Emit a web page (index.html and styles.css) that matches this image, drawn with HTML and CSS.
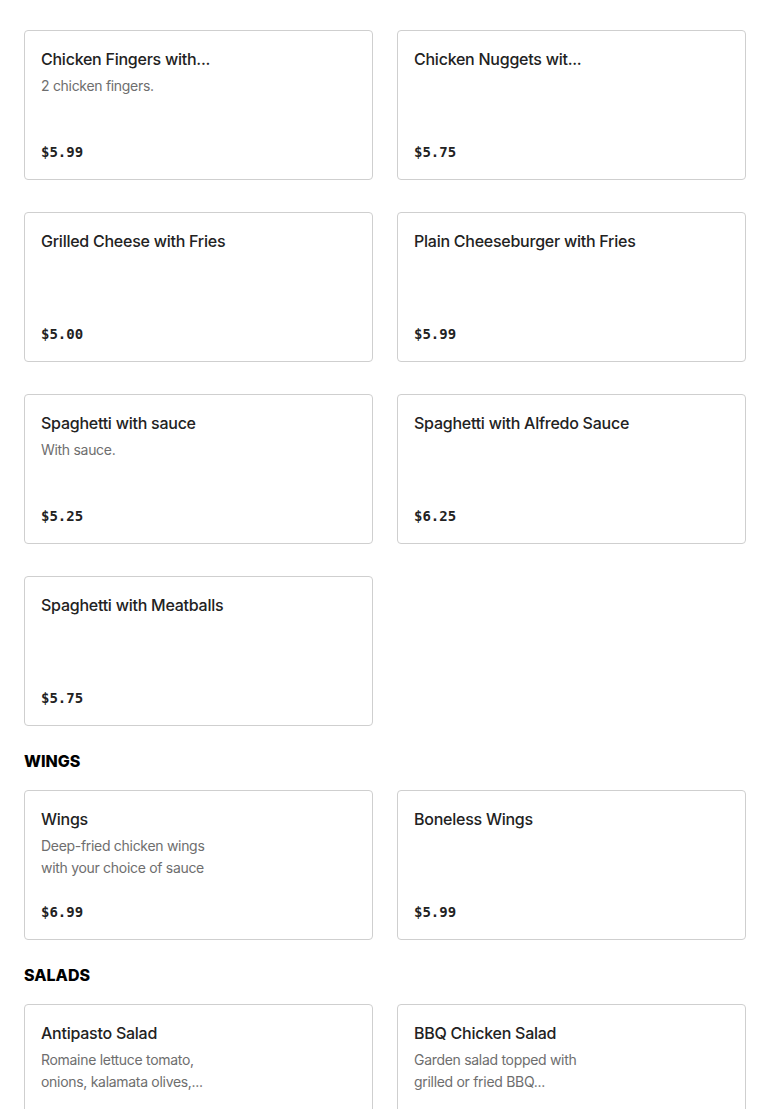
FILE: index.html
```html
<!DOCTYPE html>
<html>
<head>
<meta charset="utf-8">
<link rel="stylesheet" href="styles.css">
</head>
<body>
<main class="menu">
  <section class="section first">
    <div class="grid">
      <div class="card"><div class="name">Chicken Fingers with...</div><div class="desc">2 chicken fingers.</div><div class="price">$5.99</div></div>
      <div class="card"><div class="name">Chicken Nuggets wit...</div><div class="price">$5.75</div></div>
      <div class="card"><div class="name">Grilled Cheese with Fries</div><div class="price">$5.00</div></div>
      <div class="card"><div class="name">Plain Cheeseburger with Fries</div><div class="price">$5.99</div></div>
      <div class="card"><div class="name">Spaghetti with sauce</div><div class="desc">With sauce.</div><div class="price">$5.25</div></div>
      <div class="card"><div class="name">Spaghetti with Alfredo Sauce</div><div class="price">$6.25</div></div>
      <div class="card"><div class="name">Spaghetti with Meatballs</div><div class="price">$5.75</div></div>
    </div>
  </section>
  <section class="section">
    <h2 class="heading">WINGS</h2>
    <div class="grid">
      <div class="card"><div class="name">Wings</div><div class="desc">Deep-fried chicken wings with your choice of sauce</div><div class="price">$6.99</div></div>
      <div class="card"><div class="name">Boneless Wings</div><div class="price">$5.99</div></div>
    </div>
  </section>
  <section class="section">
    <h2 class="heading">SALADS</h2>
    <div class="grid">
      <div class="card"><div class="name">Antipasto Salad</div><div class="desc">Romaine lettuce tomato, onions, kalamata olives,...</div></div>
      <div class="card"><div class="name">BBQ Chicken Salad</div><div class="desc">Garden salad topped with grilled or fried BBQ...</div></div>
    </div>
  </section>
</main>
</body>
</html>
```
FILE: styles.css
```css
html, body {
  margin: 0;
  padding: 0;
  background: #fff;
}
body {
  font-family: "Inter", "Liberation Sans", sans-serif;
  color: #1f1f1f;
}
.menu {
  padding: 30px 24px 0;
}
.section {
  margin-top: 24px;
}
.section.first {
  margin-top: 0;
}
.heading {
  margin: 0 0 18px;
  font-size: 16px;
  line-height: 22px;
  font-weight: 800;
  color: #000;
}
.grid {
  display: grid;
  grid-template-columns: 1fr 1fr;
  column-gap: 24px;
  row-gap: 32px;
}
.card {
  box-sizing: border-box;
  height: 150px;
  border: 1px solid #cfcfcf;
  border-radius: 4px;
  padding: 16px;
  display: flex;
  flex-direction: column;
}
.name {
  font-size: 16px;
  line-height: 24px;
  font-weight: 500;
  letter-spacing: -0.25px;
  color: #222;
}
.desc {
  margin-top: 4px;
  font-size: 14px;
  line-height: 22px;
  letter-spacing: -0.3px;
  color: #6e6e6e;
  max-width: 175px;
}
.price {
  margin-top: auto;
  font-family: "DejaVu Sans Mono", "Liberation Mono", monospace;
  font-weight: bold;
  font-size: 14px;
  line-height: 22px;
  color: #222;
}
```
